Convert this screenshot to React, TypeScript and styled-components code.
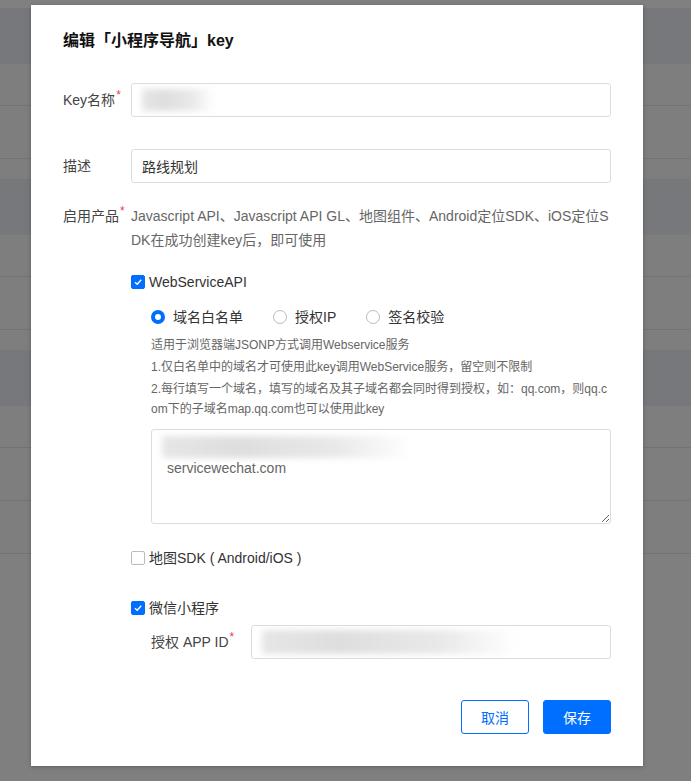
import styled, { createGlobalStyle } from "styled-components"

const GlobalStyle = createGlobalStyle`
  html, body {
    margin: 0;
    padding: 0;
  }
  body {
    min-height: 781px;
    font-family: "Liberation Sans", "Noto Sans CJK SC", sans-serif;
    background: linear-gradient(
      to bottom,
      #808080 0 8px,
      #76787b 8px 64px,
      #7e7e7e 64px 105px,
      #737373 105px 106px,
      #7e7e7e 106px 158px,
      #737373 158px 159px,
      #7e7e7e 159px 179px,
      #76787b 179px 235px,
      #7e7e7e 235px 276px,
      #737373 276px 277px,
      #7e7e7e 277px 329px,
      #737373 329px 330px,
      #7e7e7e 330px 350px,
      #76787b 350px 406px,
      #7e7e7e 406px 447px,
      #737373 447px 448px,
      #7e7e7e 448px 500px,
      #737373 500px 501px,
      #7e7e7e 501px 553px,
      #737373 553px 554px,
      #7f7f7f 554px 100%
    );
  }
`

const blue = "#006eff"

const Modal = styled.div`
  box-sizing: border-box;
  width: 612px;
  height: 761px;
  margin: 5px 0 0 31px;
  padding: 24px 32px 0;
  background: #fff;
  box-shadow: 0 1px 4px rgba(0, 0, 0, 0.25);
`

const Title = styled.h3`
  margin: 0 0 30px;
  font-size: 16px;
  line-height: 24px;
  font-weight: bold;
  color: #111;
`

const FormRow = styled.div<{ $gap?: number; $top?: boolean }>`
  display: grid;
  grid-template-columns: 68px 1fr;
  align-items: ${p => (p.$top ? "start" : "center")};
  margin-bottom: ${p => p.$gap ?? 0}px;
`

const Label = styled.div`
  font-size: 14px;
  line-height: 24px;
  color: #444;
  white-space: nowrap;
`

const Req = styled.span`
  color: #e54545;
  font-size: 12px;
  vertical-align: top;
  line-height: 14px;
  margin-left: 1px;
`

const InputBox = styled.div`
  position: relative;
  box-sizing: border-box;
  height: 34px;
  border: 1px solid #dcdcdc;
  border-radius: 3px;
  padding: 0 10px;
  display: flex;
  align-items: center;
  font-size: 14px;
  color: #333;
  overflow: hidden;
`

const Blur = styled.div<{ $w: number; $h?: number }>`
  width: ${p => p.$w}px;
  height: ${p => p.$h ?? 22}px;
  background: linear-gradient(to right, #e6e6e6 0%, #dedede 30%, #e9e9e9 70%, rgba(245, 245, 245, 0) 100%);
  filter: blur(3px);
`

const Content = styled.div`
  display: flex;
  flex-direction: column;
`

const Desc = styled.div`
  font-size: 14px;
  line-height: 24px;
  color: #666;
  word-break: break-all;
`

const CheckRow = styled.label<{ $mt: number }>`
  display: flex;
  align-items: center;
  gap: 4px;
  margin-top: ${p => p.$mt}px;
  font-size: 14px;
  line-height: 22px;
  color: #333;
`

const Box = styled.span<{ $on?: boolean }>`
  box-sizing: border-box;
  width: 14px;
  height: 14px;
  border-radius: 2px;
  border: 1px solid ${p => (p.$on ? blue : "#bbb")};
  background: ${p => (p.$on ? blue : "#fff")};
  display: flex;
  align-items: center;
  justify-content: center;
  flex-shrink: 0;
`

const Sub = styled.div`
  padding-left: 20px;
  display: flex;
  flex-direction: column;
`

const RadioGroup = styled.div`
  display: flex;
  gap: 30px;
  margin-top: 13px;
`

const RadioItem = styled.label`
  display: flex;
  align-items: center;
  gap: 8px;
  font-size: 14px;
  line-height: 22px;
  color: #333;
`

const Dot = styled.span<{ $on?: boolean }>`
  box-sizing: border-box;
  width: 14px;
  height: 14px;
  border-radius: 50%;
  border: ${p => (p.$on ? `4px solid ${blue}` : "1px solid #bbb")};
  background: #fff;
`

const Help = styled.div`
  margin-top: 7px;
  display: flex;
  flex-direction: column;
  gap: 2px;
  font-size: 12px;
  line-height: 20px;
  color: #666;
  word-break: break-all;
`

const AreaWrap = styled.div`
  position: relative;
  margin-top: 10px;
`

const TextArea = styled.textarea`
  display: block;
  box-sizing: border-box;
  width: 100%;
  height: 95px;
  border: 1px solid #dcdcdc;
  border-radius: 3px;
  padding: 8px 15px;
  font-family: "Liberation Sans", "Noto Sans CJK SC", sans-serif;
  font-size: 14px;
  line-height: 20px;
  color: #666;
  resize: vertical;
  outline: none;
`

const AreaBlur = styled.div`
  position: absolute;
  left: 11px;
  top: 7px;
`

const AppRow = styled.div`
  display: grid;
  grid-template-columns: 100px 1fr;
  align-items: center;
  margin-top: 6px;
  padding-left: 20px;
`

const Footer = styled.div`
  display: flex;
  justify-content: flex-end;
  gap: 14px;
  margin-top: 41px;
`

const Button = styled.button<{ $primary?: boolean }>`
  box-sizing: border-box;
  width: 68px;
  height: 34px;
  border-radius: 3px;
  border: 1px solid ${blue};
  background: ${p => (p.$primary ? blue : "#fff")};
  color: ${p => (p.$primary ? "#fff" : blue)};
  font-family: "Liberation Sans", "Noto Sans CJK SC", sans-serif;
  font-size: 14px;
  cursor: pointer;
`

const Check = () => (
  <svg width="10" height="10" viewBox="0 0 10 10">
    <path d="M2 5.2 L4.2 7.2 L8.2 2.8" fill="none" stroke="#fff" strokeWidth="1.4" />
  </svg>
)

const App = () => {
  return (
    <>
      <GlobalStyle />
      <Modal>
        <Title>编辑「小程序导航」key</Title>

        <FormRow $gap={32}>
          <Label>Key名称<Req>*</Req></Label>
          <InputBox>
            <Blur $w={72} />
          </InputBox>
        </FormRow>

        <FormRow $gap={21}>
          <Label>描述</Label>
          <InputBox>路线规划</InputBox>
        </FormRow>

        <FormRow $top>
          <Label>启用产品<Req>*</Req></Label>
          <Content>
            <Desc>Javascript API、Javascript API GL、地图组件、Android定位SDK、iOS定位SDK在成功创建key后，即可使用</Desc>

            <CheckRow $mt={19}>
              <Box $on><Check /></Box>
              WebServiceAPI
            </CheckRow>
            <Sub>
              <RadioGroup>
                <RadioItem><Dot $on />域名白名单</RadioItem>
                <RadioItem><Dot />授权IP</RadioItem>
                <RadioItem><Dot />签名校验</RadioItem>
              </RadioGroup>
              <Help>
                <div>适用于浏览器端JSONP方式调用Webservice服务</div>
                <div>1.仅白名单中的域名才可使用此key调用WebService服务，留空则不限制</div>
                <div>2.每行填写一个域名，填写的域名及其子域名都会同时得到授权，如：qq.com，则qq.com下的子域名map.qq.com也可以使用此key</div>
              </Help>
              <AreaWrap>
                <TextArea readOnly value={"\nservicewechat.com"} />
                <AreaBlur><Blur $w={250} /></AreaBlur>
              </AreaWrap>
            </Sub>

            <CheckRow $mt={23}>
              <Box />
              地图SDK ( Android/iOS )
            </CheckRow>

            <CheckRow $mt={28}>
              <Box $on><Check /></Box>
              微信小程序
            </CheckRow>
            <AppRow>
              <Label>授权 APP ID<Req>*</Req></Label>
              <InputBox>
                <Blur $w={255} $h={24} />
              </InputBox>
            </AppRow>
          </Content>
        </FormRow>

        <Footer>
          <Button>取消</Button>
          <Button $primary>保存</Button>
        </Footer>
      </Modal>
    </>
  )
}

export default App
